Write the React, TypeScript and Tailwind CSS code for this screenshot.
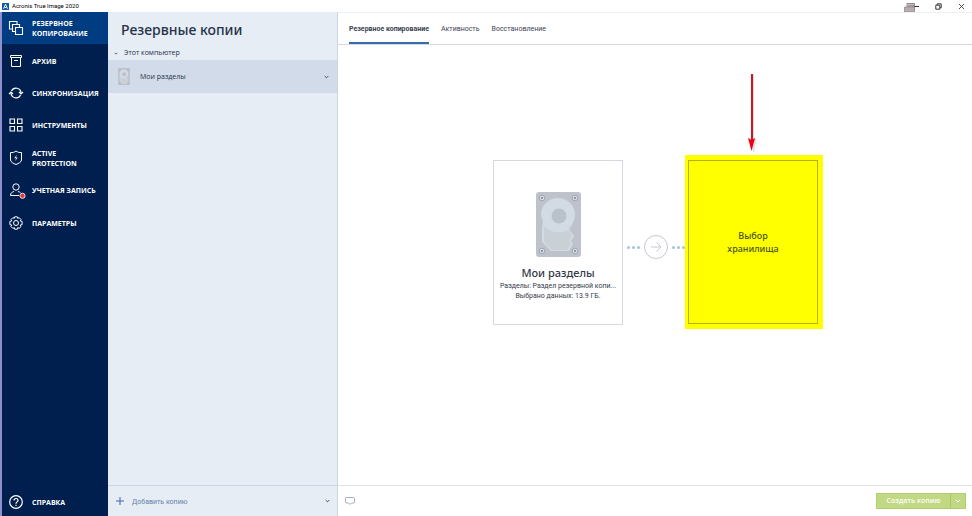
import React from 'react';

const tabs = ['Резервное копирование', 'Активность', 'Восстановление'];

const stroke = {
  viewBox: '0 0 14 14',
  fill: 'none',
  stroke: 'currentColor',
  strokeWidth: 1,
  className: 'h-[14px] w-[14px] shrink-0 overflow-visible',
  'aria-hidden': true,
} as const;

const BackupIcon = () => (
  <svg {...stroke} strokeWidth={1.1}>
    <path d="M3.500 8H.5V.5H8v3" />
    <path d="M6 10.500H3.500v-7h7V6" />
    <path d="M6.500 6.500h7v7h-7z" />
  </svg>
);

const ArchiveIcon = () => (
  <svg {...stroke}>
    <path d="M1.500 1.500h11v2h-11zM2.500 3.500v9h9v-9M5 6.500h4" />
  </svg>
);

const SyncIcon = () => (
  <svg {...stroke} strokeWidth={1.2}>
    <path d="M2.500 5a5 5 0 0 1 9.500 2M11.500 9a5 5 0 0 1-9.500-2" />
    <path d="m10 6 2 2 2-2M0 8l2-2 2 2" />
  </svg>
);

const ToolsIcon = () => (
  <svg {...stroke} strokeWidth={1.1}>
    <path d="M1 1h4.500v4.500H1zM8.500 1H13v4.500H8.500zM1 8.500h4.500V13H1zM8.500 8.500H13V13H8.500z" />
  </svg>
);

const ShieldIcon = () => (
  <svg {...stroke}>
    <path d="M1.500 1.500c2 .3 4-.2 5.500-1.500 1.500 1.300 3.500 1.800 5.500 1.500v7.500c0 2-3 3.500-5.500 4.500-2.500-1-5.500-2.500-5.500-4.500z" />
    <path d="M8 3.500 5.300 7.300h1.900L6 10.200l2.700-3.700H6.800z" fill="currentColor" stroke="none" />
  </svg>
);

const AccountIcon = () => (
  <svg {...stroke}>
    <circle cx="7" cy="4" r="3.200" />
    <path d="M5 8.500C3 9 1.500 10 1.500 12.500H10" />
    <path d="M9 8.500c1 .2 1.800.6 2.500 1.200" />
    <circle cx="13.500" cy="12.800" r="2.600" fill="#e0364c" stroke="#fff" strokeWidth=".8" />
  </svg>
);

const GearIcon = () => (
  <svg {...stroke}>
    <path
      strokeLinejoin="round"
      d="M5.700.8h2.600l.4 1.600 1.400-.8 1.900 1.900-.8 1.400 1.900.5v3.200l-1.900.5.8 1.400-1.900 1.900-1.400-.8-.4 1.600H5.700l-.4-1.600-1.400.8L2 10.500l.8-1.400L.9 8.600V5.400l1.900-.5L2 3.500l1.900-1.900 1.400.8z"
    />
    <circle cx="7" cy="7" r="2.500" />
  </svg>
);

const HelpIcon = () => (
  <svg {...stroke} strokeWidth={1.2}>
    <circle cx="7" cy="7" r="6.300" />
    <path d="M5 5.500c0-2.700 4-2.600 4 0C9 7 7 6.800 7 8.700M7 9.700v1.200" />
  </svg>
);

const navItems = [
  { lines: ['РЕЗЕРВНОЕ', 'КОПИРОВАНИЕ'], Icon: BackupIcon },
  { lines: ['АРХИВ'], Icon: ArchiveIcon },
  { lines: ['СИНХРОНИЗАЦИЯ'], Icon: SyncIcon },
  { lines: ['ИНСТРУМЕНТЫ'], Icon: ToolsIcon },
  { lines: ['ACTIVE', 'PROTECTION'], Icon: ShieldIcon },
  { lines: ['УЧЕТНАЯ ЗАПИСЬ'], Icon: AccountIcon },
  { lines: ['ПАРАМЕТРЫ'], Icon: GearIcon },
];

const Chevron = ({ className }: { className: string }) => (
  <svg viewBox="0 0 6 4" fill="none" stroke="currentColor" className={className} aria-hidden>
    <path d="M.8.8 3 3 5.200.8" />
  </svg>
);

const DiskIcon = ({ className }: { className: string }) => (
  <svg viewBox="0 0 45 65" className={className} aria-hidden>
    <rect width="45" height="65" rx="3" fill="#bec2cb" />
    <path
      d="M22 6c9 0 17 7 17 16 0 6-3 11-6 15l5 7-3 5 2 3-4 7H15L6 50V37l1-8c-1-2-2-4-2-7C5 13 13 6 22 6z"
      fill="#d2dbe4"
    />
    <path d="M8 34c7 7 18 8 25 4l3 6-3 5 2 3-4 6H16l-8-8z" fill="#cad1d6" />
    <circle cx="23" cy="24" r="7.500" fill="#b9c1cc" />
    {[[6, 6], [39, 6], [6, 59], [39, 59]].map(([cx, cy]) => (
      <g key={`${cx}-${cy}`}>
        <circle cx={cx} cy={cy} r="2.800" fill="#d9dee4" stroke="#949ca9" strokeWidth=".8" />
        <circle cx={cx} cy={cy} r="1.100" fill="#7f8896" />
      </g>
    ))}
  </svg>
);

const Dots = () => (
  <div className="flex gap-[2px]">
    <span className="h-[3px] w-[3px] rounded-full bg-[#a3c5d6]" />
    <span className="h-[3px] w-[3px] rounded-full bg-[#a3c5d6]" />
    <span className="h-[3px] w-[3px] rounded-full bg-[#a3c5d6]" />
  </div>
);

const TitleBar = () => (
  <header className="flex h-3 shrink-0 items-center bg-white pl-[2px] pr-[7px] text-black">
    <svg viewBox="0 0 7 7" className="mr-[3px] h-[7px] w-[7px]" aria-hidden>
      <path d="M0 0h7v7H0z" fill="#1459a5" />
      <path d="M1.500 5.800 3.500 1.200l2 4.600M2.500 4.500h2" fill="none" stroke="#fff" strokeWidth=".9" />
    </svg>
    <h1 className="grow font-['Roboto','Open_Sans',sans-serif] text-[6px] leading-3">Acronis True Image 2020</h1>
    <div className="flex items-center gap-4">
      <button aria-label="Свернуть">
        <svg viewBox="0 0 15 11" className="h-[11px] w-[15px]">
          <path d="M3 6V2.500h7.500V9" fill="#ddd" stroke="#8d898b" />
          <path d="M4.500 6V4h5v2" fill="#aaa" stroke="#777" strokeWidth=".6" />
          <path d="M.5 6h10v5H.5z" fill="#b9adb2" stroke="#8d7f85" strokeWidth=".7" />
          <path d="M10.500 5.500h4.500" stroke="#333" />
        </svg>
      </button>
      <button aria-label="Развернуть">
        <svg viewBox="0 0 7 7" fill="none" stroke="#222" strokeWidth=".9" className="h-[7px] w-[7px]">
          <path d="M.8 2.200h4v4h-4zM2.200 2V.8h4v4H5" />
        </svg>
      </button>
      <button aria-label="Закрыть">
        <svg viewBox="0 0 7 7" fill="none" stroke="#222" strokeWidth=".8" className="h-[7px] w-[7px]">
          <path d="m1 1 5 5M6 1 1 6" />
        </svg>
      </button>
    </div>
  </header>
);

const Sidebar = () => (
  <nav className="flex w-[108px] shrink-0 flex-col border-l-2 border-[#8f8fce] bg-[#001f4e] text-[7px] font-bold leading-[10px] text-white">
    <div className="grid h-[227px] auto-rows-fr">
      {navItems.map(({ lines, Icon }, i) => (
        <button
          key={lines[0]}
          className={`flex items-center gap-[9px] pl-[7px] text-left ${i === 0 ? 'bg-[#003c81]' : ''}`}
        >
          <Icon />
          <span className="pt-[2px]">
            {lines.map((line) => (
              <span key={line} className="block whitespace-nowrap">{line}</span>
            ))}
          </span>
        </button>
      ))}
    </div>
    <button className="mt-auto flex h-7 items-center gap-[9px] pl-[7px] text-left">
      <HelpIcon />
      <span className="pt-[2px]">СПРАВКА</span>
    </button>
  </nav>
);

const BackupList = () => (
  <aside className="flex w-[230px] shrink-0 flex-col border-r border-[#cdd5e5] bg-[#e7edf5] text-[7px] text-[#26324a]">
    <h2 className="px-[13px] pt-2 font-['Noto_Sans',sans-serif] text-[14px] font-medium leading-5">Резервные копии</h2>
    <button className="mt-[7px] flex h-[13px] items-center gap-[6px] pl-[6px]">
      <Chevron className="h-[3px] w-[4px]" />
      Этот компьютер
    </button>
    <button className="flex h-[33px] items-center bg-[#d2dbe9] pl-[10px] pr-2">
      <DiskIcon className="mr-[10px] h-[17px] w-3" />
      <span className="pt-[2px]">Мои разделы</span>
      <Chevron className="ml-auto h-[4px] w-[5px]" />
    </button>
    <div className="mt-auto flex h-[31px] items-center border-t border-[#ccd5e3] pl-2 pr-[7px]">
      <button className="flex items-center gap-2 text-[#647fad]">
        <svg viewBox="0 0 8 8" stroke="#3e67a5" className="h-2 w-2" aria-hidden>
          <path d="M4 0v8M0 4h8" />
        </svg>
        <span className="pt-[2px] font-['Roboto','Open_Sans',sans-serif]">Добавить копию</span>
      </button>
      <button aria-label="Другие действия" className="ml-auto">
        <Chevron className="h-[4px] w-[5px]" />
      </button>
    </div>
  </aside>
);

const BackupSetup = () => (
  <section className="flex grow items-center justify-center pb-[46px] pl-[6px]">
    <button className="flex h-[165px] w-[130px] flex-col items-center border border-[#d5d9e2] bg-white pt-[31px] text-[#343949]">
      <DiskIcon className="h-[65px] w-[45px]" />
      <span className="mt-2 font-['Noto_Sans',sans-serif] text-[11px] font-medium leading-4">Мои разделы</span>
      <span className="whitespace-nowrap font-['Roboto','Open_Sans',sans-serif] text-[7px] leading-[10px]">
        Разделы: Раздел резервной копи...
      </span>
      <span className="whitespace-nowrap font-['Roboto','Open_Sans',sans-serif] text-[7px] leading-[10px]">
        Выбрано данных: 13.9 ГБ.
      </span>
    </button>
    <div className="mt-[10px] flex items-center gap-1 pl-1">
      <Dots />
      <svg viewBox="0 0 24 24" fill="none" stroke="#c4c8d2" className="h-6 w-6" aria-hidden>
        <circle cx="12" cy="12" r="11.500" />
        <path d="M7 12h10M12.500 7.500 17 12l-4.500 4.500" />
      </svg>
      <Dots />
    </div>
    <div className="relative bg-[#ff0] py-[5px] pl-[3px] pr-[5px]">
      <button className="flex h-[164px] w-[130px] items-center justify-center border border-[#b3b300] font-['Noto_Sans',sans-serif] text-[9px] font-medium leading-[13px] text-[#4a550f]">
        <span>
          Выбор
          <br />
          хранилища
        </span>
      </button>
      <svg viewBox="0 0 10 80" className="absolute -top-[82px] left-[61px] h-20 w-[10px] overflow-visible" aria-hidden>
        <path d="M7.500 2v66M4.500 66h5.500L7.500 79z" fill="#b7c3ca" stroke="#b7c3ca" opacity=".5" />
        <path d="M6 1v68" stroke="#d3131f" strokeWidth="2" />
        <path d="M2 65l3.500 2L9 65 5.500 78z" fill="#f00010" />
      </svg>
    </div>
  </section>
);

const App: React.FC = () => {
  return (
    <div className="flex h-screen flex-col bg-white font-['Open_Sans','Noto_Sans',sans-serif]">
      <TitleBar />
      <div className="flex min-h-0 grow">
        <Sidebar />
        <BackupList />
        <main className="flex min-w-0 grow flex-col border-t border-[#edf0f4]">
          <div className="flex h-8 shrink-0 gap-3 border-b border-[#d6dae5] px-[11px] font-['Roboto','Open_Sans',sans-serif] text-[7px] text-[#3c4252]">
            {tabs.map((tab, i) => (
              <button
                key={tab}
                className={`border-b-2 pt-1 ${i === 0 ? 'border-[#376bae] font-bold' : 'border-transparent'}`}
              >
                {tab}
              </button>
            ))}
          </div>
          <BackupSetup />
          <footer className="flex h-[31px] shrink-0 items-center justify-between border-t border-[#dfe2e9] pl-[7px] pr-[6px]">
            <button aria-label="Комментарий">
              <svg viewBox="0 0 10 8" fill="none" stroke="#9da4b1" strokeWidth=".9" className="h-2 w-[10px]">
                <path d="M.5 1.500q0-1 1-1h7q1 0 1 1v3.500q0 1-1 1H6.500L5 7.500 3.500 6h-2q-1 0-1-1z" />
              </svg>
            </button>
            <div className="flex h-4 border border-[#b3cd70] bg-[#c1d982] text-[7px] font-semibold text-white">
              <button className="w-[73px]">Создать копию</button>
              <button aria-label="Варианты создания" className="flex w-[15px] items-center justify-center border-l border-[#acc568]">
                <Chevron className="h-[4px] w-[6px]" />
              </button>
            </div>
          </footer>
        </main>
      </div>
    </div>
  );
};

export default App;
